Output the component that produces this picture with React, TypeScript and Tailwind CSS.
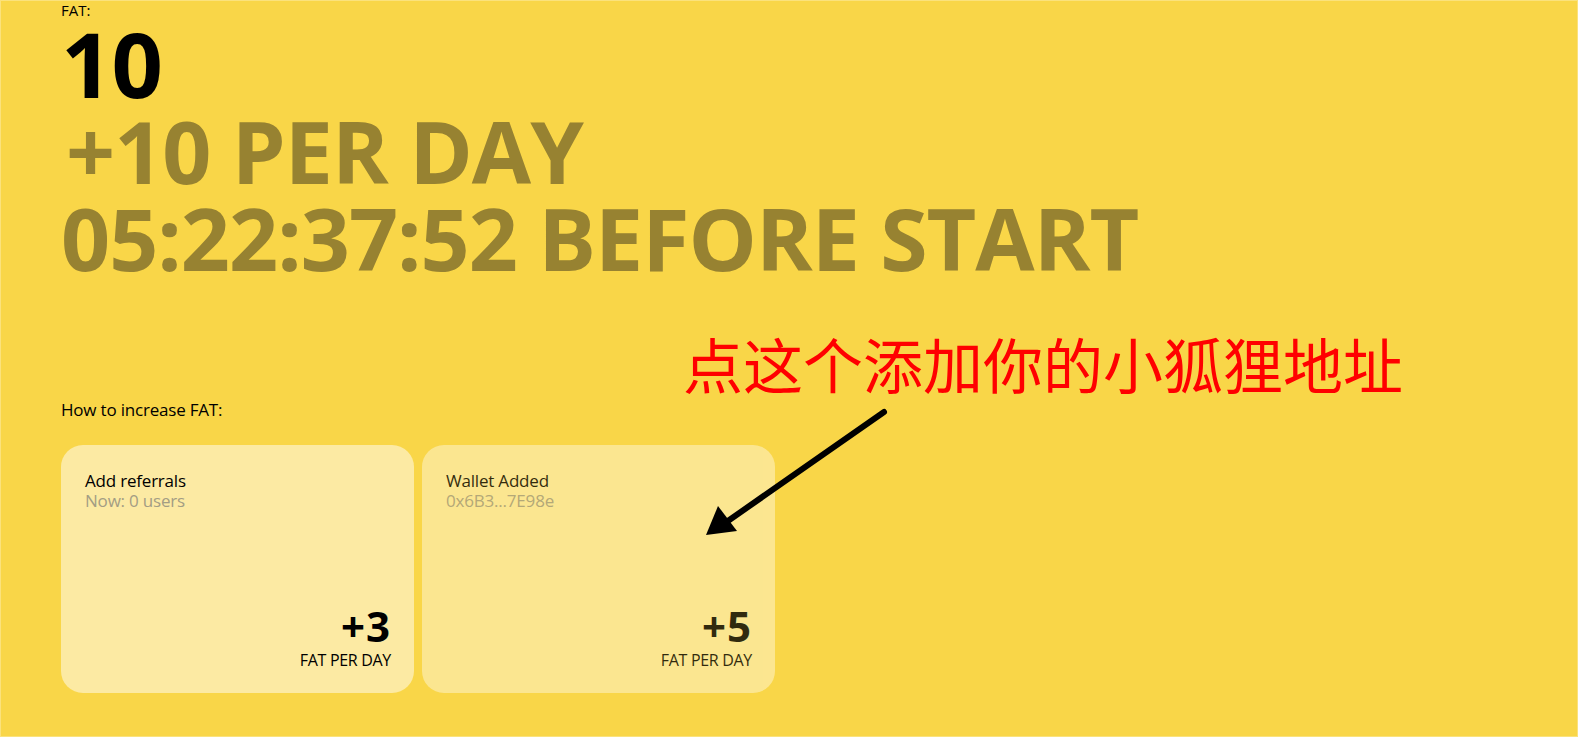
import React from 'react';

const font = { fontFamily: '"Open Sans", "Noto Sans", sans-serif' };

function BoostCard({
  title,
  sub,
  amount,
  dim,
}: {
  title: string;
  sub: string;
  amount: string;
  dim?: boolean;
}) {
  return (
    <div
      className={`flex h-[248px] w-[353px] flex-col justify-between rounded-[22px] bg-[#fceaa3] pt-[26px] pr-[23px] pb-[23px] pl-6 ${
        dim ? 'opacity-80' : ''
      }`}
    >
      <div className="text-[17px] leading-[20px] tracking-[-0.2px]">
        <div className="text-black">{title}</div>
        <div className="text-[#a39d84]">{sub}</div>
      </div>
      <div className="text-right">
        <div className="text-[42px] font-bold leading-[44px] tracking-[1px] text-black">{amount}</div>
        <div className="mt-[2px] text-[16px] leading-[20px] tracking-[-0.3px] text-black">FAT PER DAY</div>
      </div>
    </div>
  );
}

export default function App() {
  return (
    <div
      style={font}
      className="relative min-h-screen overflow-hidden border border-[#fbe27c] bg-[#f9d648] text-black"
    >
      <div className="pl-[60px]">
        <div className="text-[15px] leading-[18px]">FAT:</div>
        <div className="text-[90px] font-bold leading-[88px] tracking-[-1px]">10</div>
        <div className="pl-[5px] text-[86px] font-bold leading-[88px] tracking-[-1px] text-[#978231]">
          +10 PER DAY
        </div>
        <div className="text-[86px] font-bold leading-[86px] tracking-[-1px] text-[#978231]">
          05:22:37:52 BEFORE START
        </div>

        <div className="mt-[119px] text-[17px] leading-[20px] tracking-[-0.2px]">How to increase FAT:</div>

        <div className="mt-[25px] flex gap-[8px]">
          <BoostCard title="Add referrals" sub="Now: 0 users" amount="+3" />
          <BoostCard title="Wallet Added" sub="0x6B3...7E98e" amount="+5" dim />
        </div>
      </div>

      {/* annotation */}
      <div
        className="absolute left-[682px] top-[322px] text-[60px] leading-[80px] text-[#ff0000]"
        style={{ fontFamily: '"Noto Sans CJK SC", "Noto Sans", sans-serif' }}
      >
        点这个添加你的小狐狸地址
      </div>
      <svg
        className="absolute left-[700px] top-[405px]"
        width="190"
        height="135"
        viewBox="0 0 190 135"
      >
        <line x1="183" y1="6" x2="24" y2="117" stroke="#000" strokeWidth="6" strokeLinecap="round" />
        <polygon points="5,129 17,100 36,125" fill="#000" />
      </svg>
    </div>
  );
}
